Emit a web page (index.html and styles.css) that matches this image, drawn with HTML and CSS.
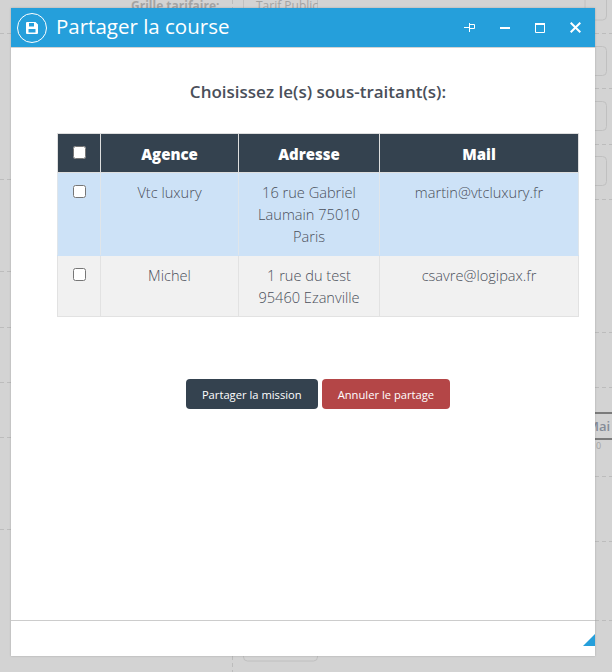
FILE: index.html
```html
<!DOCTYPE html>
<html lang="fr">
<head>
  <meta charset="UTF-8">
  <title>Partager la course</title>
  <link rel="stylesheet" href="styles.css">
</head>
<body>
  <!-- page behind the dialog -->
  <div class="backdrop">
    <svg class="bg-lines" width="612" height="672" viewBox="0 0 612 672">
      <g class="bg-dashes">
        <path d="M0 33.500H11M0 179.500H11M0 271.500H11M0 327.500H11M0 382.500H11M0 437.500H11M0 529.500H11"/>
        <path d="M595 33.500H612M595 88.500H612M595 144.500H612M595 199.500H612M595 332.500H612M595 387.500H612M595 476.500H612M595 541.500H612M595 620.500H612"/>
        <path d="M232.500 0V8M232.500 656V672"/>
      </g>
      <g class="bg-boxes">
        <rect x="585" y="-10" width="21.500" height="30" rx="4"/>
        <rect x="585" y="46.500" width="21.500" height="29" rx="4"/>
        <rect x="585" y="101.500" width="21.500" height="29" rx="4"/>
        <rect x="585" y="156.500" width="21.500" height="29" rx="4"/>
        <rect x="243.500" y="-10" width="74" height="30" rx="4"/>
        <rect x="243.500" y="630" width="74" height="31" rx="4"/>
      </g>
    </svg>
    <span class="bg-grille">Grille tarifaire:</span>
    <span class="bg-value">Tarif Public</span>
    <span class="bg-mai">Mai</span>
    <span class="bg-zero">0</span>
  </div>

  <div class="dialog">
    <div class="dialog-header">
      <span class="dialog-icon">
        <svg width="12" height="12" viewBox="0 0 12 12">
          <path fill="#fff" fill-rule="evenodd" d="M0 1a1 1 0 0 1 1-1h8.500L12 2.500V11a1 1 0 0 1-1 1H1a1 1 0 0 1-1-1zM3 1V4.500H8V1zM2.500 7V10.500H9.500V7z"/>
        </svg>
      </span>
      <span class="dialog-title">Partager la course</span>
      <div class="dialog-controls">
        <svg width="11" height="9" viewBox="0 0 11 9">
          <path fill="none" stroke="#fff" d="M0 4.500H5M5.500 0V9M5.500 1.500H10.500V5.500H5.500"/>
        </svg>
        <svg width="10" height="2" viewBox="0 0 10 2">
          <rect width="10" height="2" fill="#fff"/>
        </svg>
        <svg width="10" height="10" viewBox="0 0 10 10">
          <path fill="none" stroke="#fff" d="M.5 1H9.500V9.500H.5z"/>
          <rect width="10" height="2" fill="#fff"/>
        </svg>
        <svg width="11" height="11" viewBox="0 0 11 11">
          <path fill="none" stroke="#fff" stroke-width="2" d="M.7.7L10.300 10.300M10.300.7L.7 10.300"/>
        </svg>
      </div>
    </div>

    <div class="dialog-body">
      <h2 class="dialog-question">Choisissez le(s) sous-traitant(s):</h2>

      <table class="agency-table">
        <thead>
          <tr>
            <th class="col-check"><input type="checkbox"></th>
            <th class="col-agency">Agence</th>
            <th class="col-address">Adresse</th>
            <th>Mail</th>
          </tr>
        </thead>
        <tbody>
          <tr class="row-selected">
            <td><input type="checkbox"></td>
            <td>Vtc luxury</td>
            <td>16 rue Gabriel Laumain 75010 Paris</td>
            <td>martin@vtcluxury.fr</td>
          </tr>
          <tr class="row-plain">
            <td><input type="checkbox"></td>
            <td>Michel</td>
            <td>1 rue du test 95460 Ezanville</td>
            <td>csavre@logipax.fr</td>
          </tr>
        </tbody>
      </table>

      <div class="dialog-actions">
        <button class="btn btn-dark">Partager la mission</button>
        <button class="btn btn-red">Annuler le partage</button>
      </div>
    </div>

    <div class="dialog-footer">
      <span class="resize-grip"></span>
    </div>
  </div>
</body>
</html>
```

FILE: styles.css
```css
html, body {
  margin: 0;
  height: 100%;
  overflow: hidden;
}
body {
  position: relative;
  width: 612px;
  height: 672px;
  background-color: #d3d3d3;
  font-family: "Open Sans", sans-serif;
  color: #4a4f5a;
}

/* page behind the dialog */
.backdrop {
  position: absolute;
  inset: 0;
  color: #a3a3a3;
  font-size: 12px;
}
.backdrop span {
  position: absolute;
}
.bg-lines {
  position: absolute;
  left: 0;
  top: 0;
}
.bg-dashes path {
  fill: none;
  stroke: #bcbcbc;
  stroke-dasharray: 4 3;
}
.bg-boxes rect {
  fill: none;
  stroke: #c0c0c0;
}
.bg-grille {
  left: 131px;
  top: -3px;
  font-weight: 700;
}
.bg-value {
  left: 256px;
  top: -3px;
}
.bg-mai {
  left: 587px;
  top: 412px;
  width: 25px;
  height: 24px;
  line-height: 24px;
  border-top: 2px solid #7b7b7b;
  border-bottom: 2px solid #7b7b7b;
  color: #858c97;
  font-size: 13px;
  font-weight: 600;
  overflow: hidden;
}
.bg-zero {
  left: 596px;
  top: 439px;
  font-size: 9px;
}

/* dialog */
.dialog {
  position: absolute;
  left: 11px;
  top: 8px;
  width: 584px;
  height: 648px;
  display: flex;
  flex-direction: column;
  background-color: #fff;
  box-shadow: 0 0 2px rgba(0, 0, 0, 0.2);
}
.dialog-header {
  flex: none;
  height: 39px;
  display: flex;
  align-items: center;
  padding-left: 6px;
  background-color: #259fdb;
  border-bottom: 1px solid #d3d3d3;
  color: #fff;
}
.dialog-icon {
  width: 28px;
  height: 28px;
  display: flex;
  align-items: center;
  justify-content: center;
  border: 1px solid #fff;
  border-radius: 50%;
}
.dialog-title {
  margin-left: 9px;
  margin-bottom: 4px;
  font-size: 20.500px;
  line-height: 28px;
}
.dialog-controls {
  margin-left: auto;
  margin-right: 14px;
  display: flex;
  align-items: center;
  gap: 25px;
}

.dialog-body {
  flex: 1;
  padding: 0 16px 0 46px;
}
.dialog-question {
  margin: 32px 0 0;
  text-align: center;
  font-size: 17px;
  font-weight: 600;
  line-height: 24px;
}

.agency-table {
  margin-top: 29px;
  width: 522px;
  table-layout: fixed;
  border-collapse: collapse;
  text-align: center;
  font-size: 14.600px;
  font-weight: 300;
  line-height: 22px;
}
.agency-table th {
  height: 37px;
  padding: 1px 0 0;
  background-color: #34424f;
  border: 1px solid #dedede;
  color: #fff;
  font-size: 15px;
  font-weight: 800;
}
.agency-table th + th {
  border-left-color: #fff;
}
.agency-table td {
  padding: 8px 12px;
  vertical-align: top;
  border: 1px solid #e2e2e2;
}
.agency-table input {
  display: block;
  width: 13px;
  height: 13px;
  margin: 0 auto;
}
.agency-table th input {
  margin-bottom: 2px;
}
.agency-table td input {
  margin-top: 4px;
}
.col-check { width: 42px; }
.col-agency { width: 137px; }
.col-address { width: 140px; }
.row-selected td {
  background-color: #cde2f7;
  border-color: #cde2f7 #dfe5ea;
}
.row-plain td {
  background-color: #f1f1f1;
}

.dialog-actions {
  margin-top: 62px;
  display: flex;
  justify-content: center;
  gap: 4px;
}
.btn {
  height: 30px;
  padding: 0 16px;
  border: 0;
  border-radius: 4px;
  color: #fff;
  font-family: "Open Sans", sans-serif;
  font-size: 11.200px;
  font-weight: 500;
}
.btn-dark { background-color: #34424f; }
.btn-red { background-color: #b44647; }

.dialog-footer {
  position: relative;
  flex: none;
  height: 35px;
  border-top: 1px solid #cccccc;
}
.resize-grip {
  position: absolute;
  right: 0;
  bottom: 10px;
  width: 0;
  height: 0;
  border-left: 12px solid transparent;
  border-bottom: 12px solid #259fdb;
}
```
